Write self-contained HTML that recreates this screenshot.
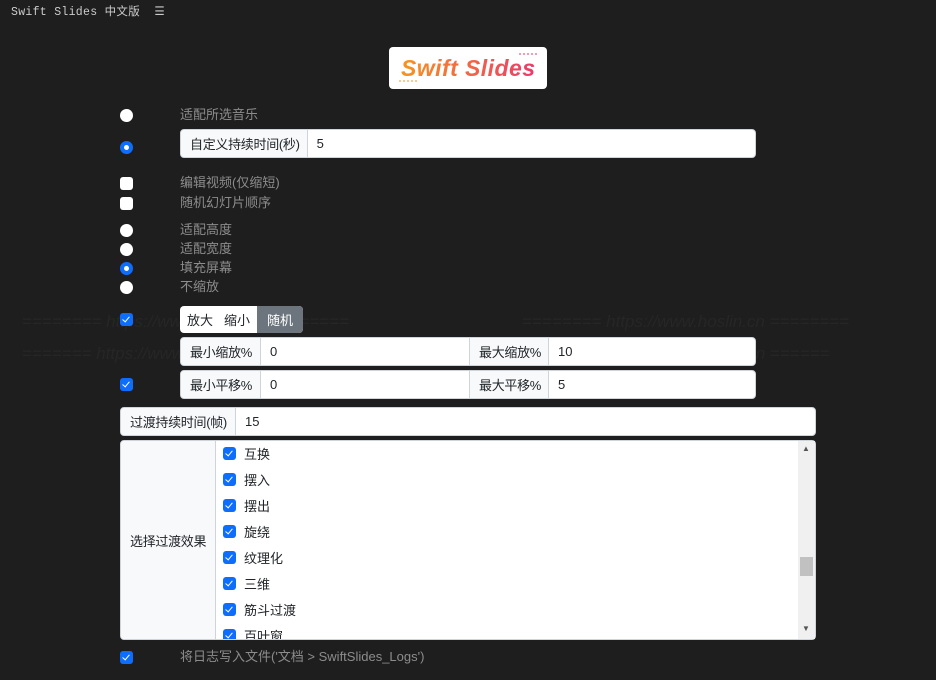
<!DOCTYPE html>
<html><head><meta charset="utf-8"><style>
*{box-sizing:border-box;margin:0;padding:0}
body{width:936px;height:680px;background:#1e1e1e;position:relative;overflow:hidden;font-family:"Liberation Sans","Noto Sans CJK SC",sans-serif;font-size:13px;color:#212529}
.a{position:absolute}
.title{left:11px;top:3px;font-family:"Liberation Mono","Noto Sans CJK SC",monospace;font-size:11.5px;color:#ccc;letter-spacing:.3px}
.rad{position:absolute;width:13px;height:13px;border-radius:50%;background:#fff}
.rad.on{background:#0d6efd}
.rad.on::after{content:"";position:absolute;left:4px;top:4px;width:5px;height:5px;border-radius:50%;background:#fff}
.chk{position:absolute;width:13px;height:13px;border-radius:3px;background:#fff}
.chk.on{background:#0d6efd}
.chk.on::after{content:"";position:absolute;left:4px;top:2px;width:3px;height:6px;border:solid #fff;border-width:0 1.6px 1.6px 0;transform:rotate(40deg)}
.lbl{position:absolute;color:#8c8c8c;line-height:16px}
.grp{position:absolute;background:#fff;border:1px solid #ced4da;border-radius:4px;display:flex;overflow:hidden}
.grp .p{background:#f8f9fa;border-right:1px solid #ced4da;padding:0 7px 0 9px;display:flex;align-items:center;white-space:nowrap;letter-spacing:-.3px}
.grp .v{padding:0 9px;display:flex;align-items:center}
.wm{position:absolute;color:#262626;font-size:17px;font-style:italic;white-space:nowrap;font-family:"Liberation Sans",sans-serif}
.item{position:absolute;left:223px;display:flex;align-items:center;gap:8px;height:16px}
.item .chk{position:relative}
</style></head><body>
<div class="a title">Swift Slides 中文版 &nbsp;☰</div>
<div class="a" style="left:389px;top:47px;width:158px;height:42px;background:#fff;border-radius:4px"></div>
<svg class="a" style="left:389px;top:47px" width="158" height="42">
<defs><linearGradient id="g" x1="0" x2="1"><stop offset="0" stop-color="#f7941d"/><stop offset="1" stop-color="#ec3a6b"/></linearGradient></defs>
<text x="79" y="29" text-anchor="middle" font-family="Liberation Sans" font-style="italic" font-weight="bold" font-size="23" textLength="134" fill="url(#g)">Swift Slides</text>
<line x1="10" y1="34" x2="30" y2="34" stroke="#f7941d" stroke-dasharray="2 2"/>
<line x1="130" y1="7" x2="150" y2="7" stroke="#ec3a6b" stroke-dasharray="2 2"/>
</svg>
<div class="rad" style="left:120px;top:109px"></div>
<div class="lbl" style="left:180px;top:107px">适配所选音乐</div>
<div class="rad on" style="left:120px;top:141px"></div>
<div class="grp" style="left:180px;top:129px;width:576px;height:29px"><div class="p">自定义持续时间(秒)</div><div class="v">5</div></div>
<div class="chk" style="left:120px;top:177px"></div>
<div class="lbl" style="left:180px;top:175px">编辑视频(仅缩短)</div>
<div class="chk" style="left:120px;top:197px"></div>
<div class="lbl" style="left:180px;top:195px">随机幻灯片顺序</div>
<div class="rad" style="left:120px;top:224px"></div><div class="lbl" style="left:180px;top:222px">适配高度</div>
<div class="rad" style="left:120px;top:243px"></div><div class="lbl" style="left:180px;top:241px">适配宽度</div>
<div class="rad on" style="left:120px;top:262px"></div><div class="lbl" style="left:180px;top:260px">填充屏幕</div>
<div class="rad" style="left:120px;top:281px"></div><div class="lbl" style="left:180px;top:279px">不缩放</div>
<div class="wm" style="left:22px;top:312px">======== https://www.hoslin.cn ========</div>
<div class="wm" style="left:522px;top:312px">======== https://www.hoslin.cn ========</div>
<div class="wm" style="left:22px;top:344px">======= https://www.hoslin.cn ==== aclick.cn ======</div>
<div class="wm" style="left:700px;top:344px">aclick.cn ======</div>
<div class="chk on" style="left:120px;top:313px"></div>
<div class="a" style="left:180px;top:306px;width:123px;height:27px;background:#fff;border-radius:4px;display:flex;overflow:hidden">
<div style="padding:0 7px;display:flex;align-items:center">放大</div><div style="padding:0 7px 0 4px;display:flex;align-items:center">缩小</div><div style="flex:1;background:#6c757d;color:#fff;display:flex;align-items:center;justify-content:center">随机</div></div>
<div class="grp" style="left:180px;top:337px;width:576px;height:29px"><div class="p" style="width:80px">最小缩放%</div><div class="v" style="width:208px">0</div><div class="p" style="width:80px;border-left:1px solid #ced4da">最大缩放%</div><div class="v">10</div></div>
<div class="chk on" style="left:120px;top:378px"></div>
<div class="grp" style="left:180px;top:370px;width:576px;height:29px"><div class="p" style="width:80px">最小平移%</div><div class="v" style="width:208px">0</div><div class="p" style="width:80px;border-left:1px solid #ced4da">最大平移%</div><div class="v">5</div></div>
<div class="grp" style="left:120px;top:407px;width:696px;height:29px"><div class="p" style="width:115px">过渡持续时间(帧)</div><div class="v">15</div></div>
<div class="grp" style="left:120px;top:440px;width:696px;height:200px"><div class="p" style="width:95px">选择过渡效果</div><div style="flex:1"></div></div>
<div class="a" style="left:798px;top:441px;width:17px;height:198px;background:#f0f0f0"></div>
<div class="a" style="left:800px;top:557px;width:13px;height:19px;background:#c1c1c1"></div>
<div class="a" style="left:802px;top:444px;font-size:8px;color:#555">▲</div>
<div class="a" style="left:802px;top:624px;font-size:8px;color:#555">▼</div>
<div class="a" style="left:215px;top:441px;width:583px;height:198px;overflow:hidden">
<div class="item" style="left:8px;top:4px"><div class="chk on"></div>互换</div>
<div class="item" style="left:8px;top:30px"><div class="chk on"></div>摆入</div>
<div class="item" style="left:8px;top:56px"><div class="chk on"></div>摆出</div>
<div class="item" style="left:8px;top:82px"><div class="chk on"></div>旋绕</div>
<div class="item" style="left:8px;top:108px"><div class="chk on"></div>纹理化</div>
<div class="item" style="left:8px;top:134px"><div class="chk on"></div>三维</div>
<div class="item" style="left:8px;top:160px"><div class="chk on"></div>筋斗过渡</div>
<div class="item" style="left:8px;top:186px"><div class="chk on"></div>百叶窗</div>
</div>
<div class="chk on" style="left:120px;top:651px"></div>
<div class="lbl" style="left:180px;top:649px">将日志写入文件('文档 &gt; SwiftSlides_Logs')</div>
</body></html>
